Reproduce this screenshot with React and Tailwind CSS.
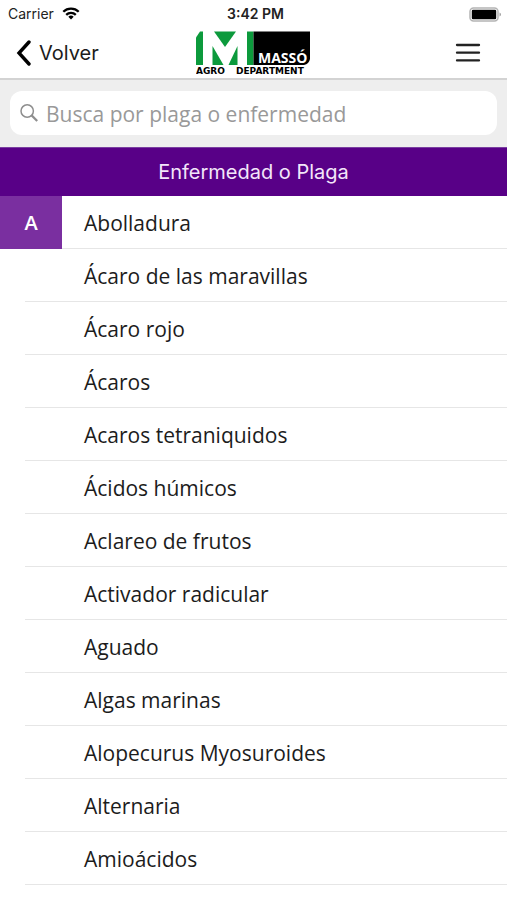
import React, { useState } from 'react';

const sections = [
  {
    letter: 'A',
    items: [
      'Abolladura',
      'Ácaro de las maravillas',
      'Ácaro rojo',
      'Ácaros',
      'Acaros tetraniquidos',
      'Ácidos húmicos',
      'Aclareo de frutos',
      'Activador radicular',
      'Aguado',
      'Algas marinas',
      'Alopecurus Myosuroides',
      'Alternaria',
      'Amioácidos'
    ]
  }
];

const WifiIcon = () => (
  <svg width="18" height="14" viewBox="0 0 18 14" fill="none" stroke="black" strokeWidth="2.3" aria-hidden="true">
    <path d="M1.3 4.8a11 11 0 0 1 15.4 0" />
    <path d="M4.2 7.8a6.9 6.9 0 0 1 9.6 0" />
    <path d="M9 12.6l-2.7-2.8a3.9 3.9 0 0 1 5.4 0z" fill="black" stroke="none" />
  </svg>
);

const BatteryIcon = () => (
  <svg width="34" height="15" viewBox="0 0 34 15" aria-hidden="true">
    <rect x="1" y="1" width="28" height="13" rx="3.5" fill="white" stroke="#b4b4b4" strokeWidth="1.5" />
    <rect x="2.8" y="2.8" width="24.4" height="9.4" rx="1.2" fill="black" />
    <path d="M30.6 5.5c1.6.6 1.6 3.4 0 4z" fill="#8a8a8a" />
  </svg>
);

const Logo = () => (
  <svg width="114" height="44" viewBox="1 0 114 44" role="img" aria-label="Massó Agro Department">
    <path d="M1 34V6.5L5 .5h3V34z" fill="#0c9a3c" />
    <path d="M19 .5h22L30 16z" fill="#0c9a3c" />
    <path d="M17.5 15v19h11z" fill="#0c9a3c" />
    <path d="M42.5 15v19h-9z" fill="#0c9a3c" />
    <path d="M52 .5h6.5V34H52z" fill="#0c9a3c" />
    <path d="M58.5 .5H115V28q-1 5-6 6H58.5z" fill="black" />
    <text x="63" y="32" fill="white" fontSize="14" fontWeight="700" fontFamily="'Open Sans', sans-serif">
      MASSÓ
    </text>
    <g fill="black" fontSize="9" fontWeight="700" fontFamily="'DejaVu Sans', sans-serif">
      <text x="1" y="43">AGRO</text>
      <text x="41" y="43">DEPARTMENT</text>
    </g>
  </svg>
);

const StatusBar = () => (
  <div className="grid h-7 grid-cols-3 items-center pl-2 pr-1 font-['Inter',sans-serif] text-sm text-[#222222]">
    <div className="flex items-center gap-2">
      <span>Carrier</span>
      <WifiIcon />
    </div>
    <span className="text-center font-semibold">3:42 PM</span>
    <div className="flex justify-end">
      <BatteryIcon />
    </div>
  </div>
);

const App = () => {
  const [search, setSearch] = useState('');

  const matches = (item) => item.toLowerCase().includes(search.trim().toLowerCase());

  return (
    <div className="min-h-screen bg-white font-['Open_Sans',sans-serif] text-[#1c1c1c]">
      {/* Header */}
      <header className="border-b-2 border-[#d3d3d3] bg-white">
        <StatusBar />
        <div className="grid h-[50px] grid-cols-3 items-center px-4">
          <button type="button" className="flex items-center gap-2 font-['Inter',sans-serif] text-xl">
            <svg width="15" height="26" viewBox="0 0 15 26" fill="none" stroke="black" strokeWidth="3.4" aria-hidden="true">
              <path d="M13 2L3 13l10 11" strokeLinecap="round" />
            </svg>
            Volver
          </button>
          <div className="flex justify-center">
            <Logo />
          </div>
          <button type="button" aria-label="Menú" className="justify-self-end px-[10px]">
            <svg width="26" height="20" viewBox="0 0 26 20" stroke="#222" strokeWidth="2.3" strokeLinecap="round" aria-hidden="true">
              <path d="M2 2h22M2 9.7h22M2 17.4h22" />
            </svg>
          </button>
        </div>
      </header>

      {/* Search */}
      <div className="bg-[#eeeeee] px-[10px] pb-3 pt-[11px]">
        <label className="flex h-11 items-center gap-2 rounded-xl bg-white px-[10px]">
          <svg width="18" height="18" viewBox="0 0 18 18" fill="none" stroke="#8e8e8e" strokeWidth="1.5" aria-hidden="true">
            <circle cx="7.2" cy="7" r="6.2" />
            <path d="M11.6 11.4L17.2 17" strokeWidth="2.2" />
          </svg>
          <input
            type="text"
            aria-label="Buscar"
            value={search}
            onChange={(e) => setSearch(e.target.value)}
            placeholder="Busca por plaga o enfermedad"
            className="min-w-0 flex-1 bg-transparent pt-1 text-[21px] outline-none placeholder:text-[#999999]"
          />
        </label>
      </div>

      <h1 className="flex h-[49px] items-center justify-center border-t border-[#7a3fa0] bg-[#580087] font-['Inter',sans-serif] text-xl text-[#f3e6fa]">
        Enfermedad o Plaga
      </h1>

      {/* List */}
      {sections.map((section) => (
        <section key={section.letter} className="flex items-start">
          <h2 className="z-10 -mr-[62px] flex h-[53px] w-[62px] shrink-0 items-center justify-center bg-[#7a2fa0] text-xl font-semibold text-white">
            {section.letter}
          </h2>
          <ul className="min-w-0 flex-1 pl-[25px]">
            {section.items.filter(matches).map((item) => (
              <li
                key={item}
                className="flex h-[53px] items-center border-b border-[#e6e6e6] pl-[59px] pt-1 text-[21px]"
              >
                {item}
              </li>
            ))}
          </ul>
        </section>
      ))}
    </div>
  );
};

export default App;
